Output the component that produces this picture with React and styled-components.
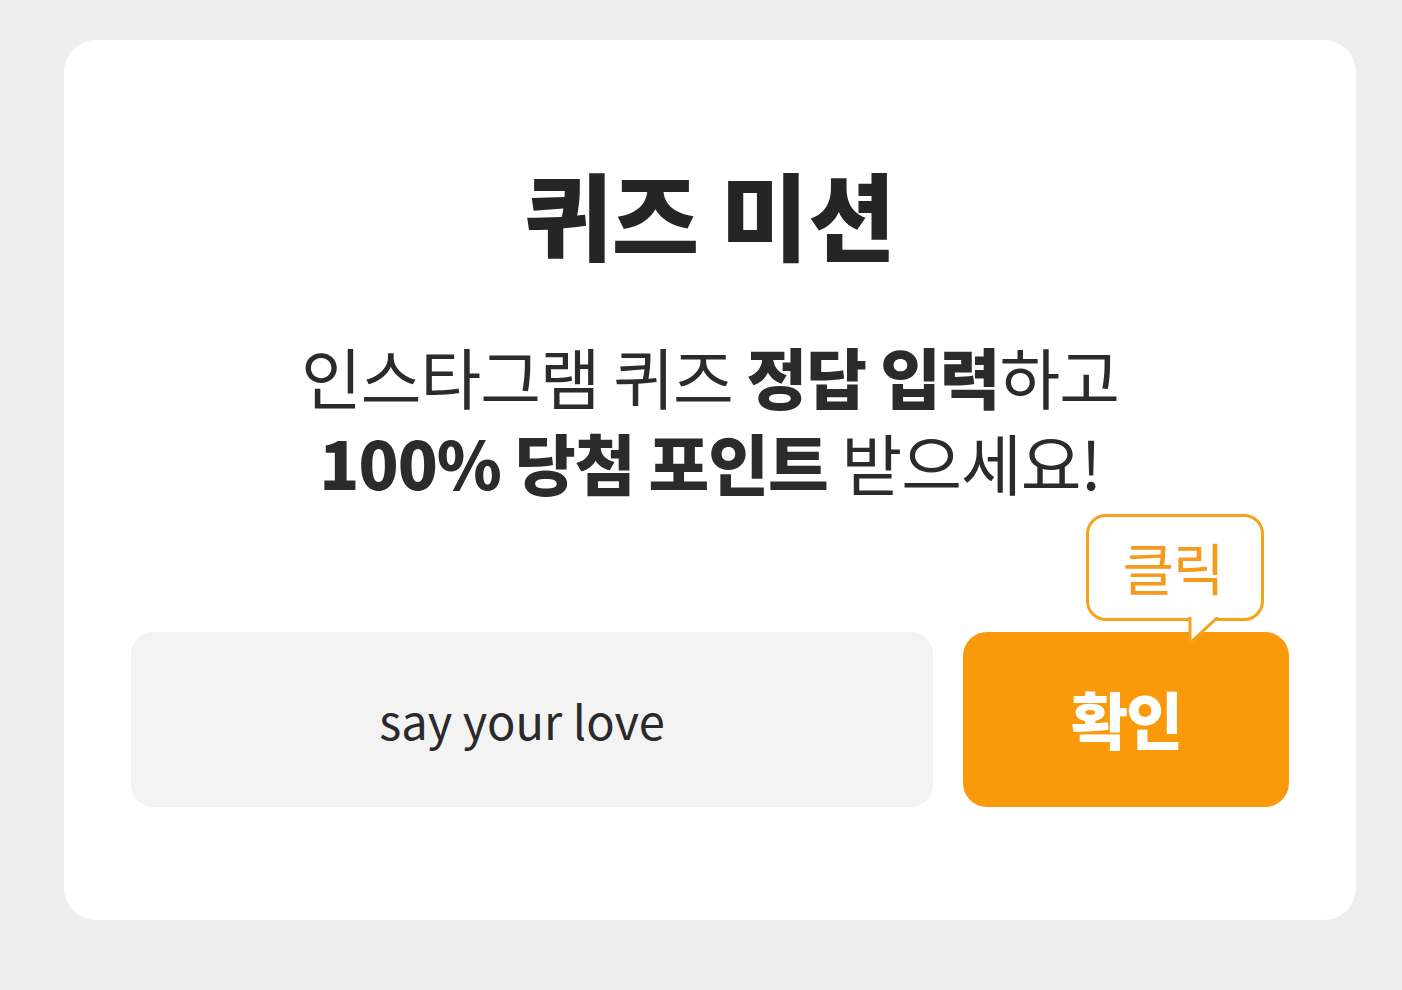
import React, {useState} from 'react'
import styled, {createGlobalStyle} from 'styled-components'

const GlobalStyle = createGlobalStyle`
  html, body {
    margin: 0;
    padding: 0;
    background: #eeeeee;
  }
  body {
    font-family: "Noto Sans CJK KR", "Noto Sans", sans-serif;
  }
`
const Page = styled.div`
  padding: 40px 46px 70px 64px;
`
const Card = styled.section`
  width: 1292px;
  height: 880px;
  box-sizing: border-box;
  background: #ffffff;
  border-radius: 32px;
  padding: 125px 67px 0;
  display: flex;
  flex-direction: column;
  align-items: center;
`
const Title = styled.h1`
  margin: 0;
  font-size: 95px;
  font-weight: 900;
  line-height: 1;
  letter-spacing: 0;
  color: #252525;
`
const Desc = styled.p`
  margin: 72px 0 0;
  font-size: 66px;
  font-weight: 400;
  line-height: 86px;
  letter-spacing: -1px;
  color: #2b2b2b;
  text-align: center;
  b {
    font-weight: 900;
  }
`
const Row = styled.div`
  margin-top: 128px;
  width: 100%;
  display: flex;
  gap: 30px;
`
const Input = styled.input`
  flex: 1;
  height: 175px;
  box-sizing: border-box;
  border: none;
  outline: none;
  border-radius: 22px;
  background: #f3f3f3;
  font-family: "Noto Sans CJK KR", "Noto Sans", sans-serif;
  font-size: 47px;
  color: #2a2a2a;
  text-align: center;
  padding: 0 20px 0 0;
`
const ButtonWrap = styled.div`
  position: relative;
  width: 326px;
`
const Button = styled.button`
  width: 100%;
  height: 175px;
  border: none;
  border-radius: 24px;
  background: #fa9a0a;
  color: #ffffff;
  font-family: "Noto Sans CJK KR", sans-serif;
  font-size: 62px;
  font-weight: 900;
  letter-spacing: -2px;
  cursor: pointer;
  padding: 0 0 4px;
`
const Bubble = styled.div`
  position: absolute;
  left: 123px;
  top: -118px;
  width: 178px;
  height: 107px;
  box-sizing: border-box;
  border: 3px solid #f7a21b;
  border-radius: 20px;
  background: #ffffff;
  color: #f59a1a;
  font-size: 56px;
  font-weight: 400;
  letter-spacing: -1px;
  display: flex;
  align-items: center;
  justify-content: center;
  padding: 0 4px 4px 0;
  z-index: 1;
`
const Tail = styled.svg`
  position: absolute;
  left: 99px;
  top: 100%;
  margin-top: -1px;
`

const App = () => {
  const [answer, setAnswer] = useState('say your love')
  return (
    <Page>
      <GlobalStyle />
      <Card>
        <Title>퀴즈 미션</Title>
        <Desc>
          인스타그램 퀴즈 <b>정답 입력</b>하고<br />
          <b>100% 당첨 포인트</b> 받으세요!
        </Desc>
        <Row>
          <Input value={answer} onChange={e => setAnswer(e.target.value)} />
          <ButtonWrap>
            <Bubble>
              클릭
              <Tail width="34" height="30" viewBox="0 0 34 30">
                <path d="M2 0 V26 L30 0 Z" fill="#ffffff" />
                <path d="M2 0 V26 L30 0" fill="none" stroke="#f7a21b" strokeWidth="3" strokeLinejoin="round" />
              </Tail>
            </Bubble>
            <Button>확인</Button>
          </ButtonWrap>
        </Row>
      </Card>
    </Page>
  )
}
export default App
